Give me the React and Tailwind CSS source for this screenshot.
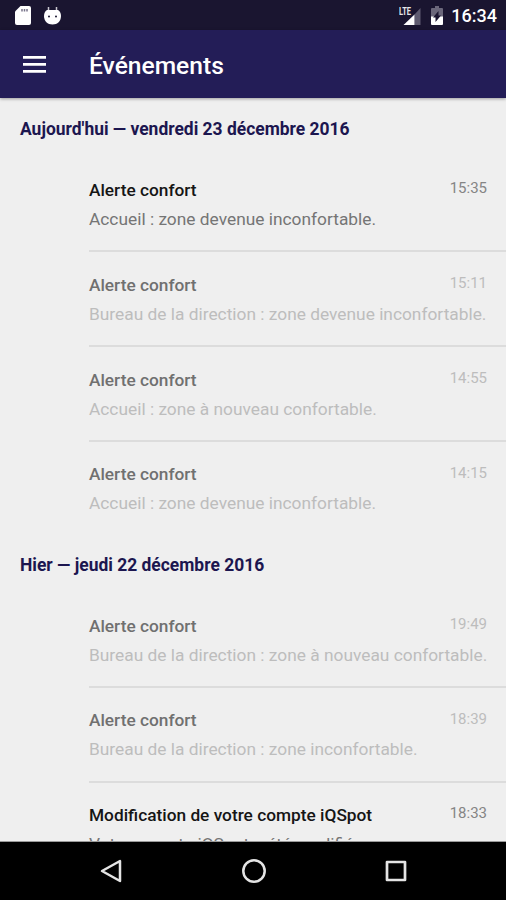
import clsx from "clsx";

const sections = [
  {
    title: "Aujourd'hui — vendredi 23 décembre 2016",
    events: [
      { title: "Alerte confort", text: "Accueil : zone devenue inconfortable.", time: "15:35", unread: true },
      { title: "Alerte confort", text: "Bureau de la direction : zone devenue inconfortable.", time: "15:11" },
      { title: "Alerte confort", text: "Accueil : zone à nouveau confortable.", time: "14:55" },
      { title: "Alerte confort", text: "Accueil : zone devenue inconfortable.", time: "14:15" },
    ],
  },
  {
    title: "Hier — jeudi 22 décembre 2016",
    events: [
      { title: "Alerte confort", text: "Bureau de la direction : zone à nouveau confortable.", time: "19:49" },
      { title: "Alerte confort", text: "Bureau de la direction : zone inconfortable.", time: "18:39" },
      { title: "Modification de votre compte iQSpot", text: "Votre compte iQSpot a été modifié.", time: "18:33", unread: true },
    ],
  },
];

const StatusBar = () => (
  <div className="flex h-[30px] shrink-0 items-center bg-[#1a1530] pl-[15px] pr-[9px] text-white">
    <svg width="16" height="19" viewBox="0 0 16 19">
      <path d="M5.500 0H14a2 2 0 0 1 2 2v15a2 2 0 0 1-2 2H2a2 2 0 0 1-2-2V5.500z" fill="#fff" />
      <path d="M7 3v2.500M9.500 3v2.500M12 3v2.500" stroke="#77738a" strokeWidth="1.500" />
    </svg>
    <svg className="ml-[13px]" width="17" height="19" viewBox="0 0 17 19">
      <path d="M4.500 1v4M12.500 1v4" stroke="#c9c7d0" strokeWidth="1.500" />
      <path d="M3 4h11c2 1 3 3.500 3 6 0 5-3.500 8.500-8.500 8.500S0 15 0 10c0-2.500 1-5 3-6z" fill="#fff" />
      <circle cx="5" cy="10.500" r="1" fill="#1a1530" />
      <circle cx="12" cy="10.500" r="1" fill="#1a1530" />
    </svg>
    <svg className="ml-auto" width="22" height="19" viewBox="0 0 22 19">
      <path d="M21.500 2v17h-6V8.500z" fill="#5f5b70" />
      <path d="M15.500 8.500V19H4.500z" fill="#fff" />
      <text x="0" y="8.500" textLength="12" lengthAdjust="spacingAndGlyphs" fill="#e6e5ea" className="text-[10px] font-bold">
        LTE
      </text>
    </svg>
    <svg className="ml-[10px]" width="12" height="19" viewBox="0 0 12 19">
      <path d="M4 0h4v2h3a1 1 0 0 1 1 1v8H0V3a1 1 0 0 1 1-1h3z" fill="#6b677b" />
      <path d="M0 10.500h12V18a1 1 0 0 1-1 1H1a1 1 0 0 1-1-1z" fill="#fff" />
      <path d="M7.500 5v4.500H10L4.500 16v-4.500H2z" fill="#1a1530" />
    </svg>
    <span className="ml-[8px] mt-[2px] text-[18px] font-medium leading-none">16:34</span>
  </div>
);

const AppBar = () => (
  <header className="z-10 flex h-[68px] shrink-0 items-center bg-[#231d57] pl-[23px] text-white shadow-[0_1px_3px_rgba(0,0,0,0.35)]">
    <svg className="mt-[2px]" width="23" height="18" viewBox="0 0 23 18" fill="#fff">
      <path d="M0 0h23v2.800H0zM0 7h23v2.800H0zM0 14h23v2.800H0z" />
    </svg>
    <h1 className="ml-[43px] mt-[4px] text-[24.6px] font-medium leading-none">Événements</h1>
  </header>
);

const EventRow = ({ event, last }) => (
  <li className="pl-[89px]">
    <div className={clsx("h-[94.75px] pt-[20.6px]", !last && "border-b-2 border-[#dcdcdc]")}>
      <div className="flex justify-between pr-[19px]">
        <h3 className={clsx("text-[17.3px] font-medium leading-6", event.unread ? "text-[#151515]" : "text-[#707070]")}>
          {event.title}
        </h3>
        <span className={clsx("mt-[0.4px] text-[15px] leading-5", event.unread ? "text-[#858585]" : "text-[#bdbdbd]")}>
          {event.time}
        </span>
      </div>
      <p className={clsx("mt-[5px] whitespace-nowrap text-[17.33px] leading-6", event.unread ? "text-[#757575]" : "text-[#bdbdbd]")}>
        {event.text}
      </p>
    </div>
  </li>
);

const NavBar = () => (
  <nav className="flex h-[58px] shrink-0 items-center justify-between bg-black pl-[100px] pr-[99px]">
    <svg width="22" height="24" viewBox="0 0 22 24" fill="none" stroke="#e4e4e4" strokeWidth="2.500" strokeLinejoin="round">
      <path d="M20 2v20L2 12z" />
    </svg>
    <svg width="26" height="26" viewBox="0 0 26 26" fill="none" stroke="#e4e4e4" strokeWidth="2.500">
      <circle cx="13" cy="13" r="10.700" />
    </svg>
    <svg width="22" height="22" viewBox="0 0 22 22" fill="none" stroke="#e4e4e4" strokeWidth="2.700" strokeLinejoin="round">
      <path d="M2 2h18v18H2z" />
    </svg>
  </nav>
);

const App = () => {
  return (
    <div className="flex h-[900px] w-[506px] flex-col overflow-hidden bg-[#efefef] font-['Roboto',sans-serif]">
      <StatusBar />
      <AppBar />
      <main className="min-h-0 flex-1 overflow-hidden border-b border-[#9a9a9a] pt-[3px]">
        {sections.map((section) => (
          <section key={section.title}>
            <h2 className="flex h-[56.5px] items-center pl-5 text-[17.45px] font-bold text-[#1c164f]">{section.title}</h2>
            <ul>
              {section.events.map((event, i) => (
                <EventRow key={event.time} event={event} last={i === section.events.length - 1} />
              ))}
            </ul>
          </section>
        ))}
      </main>
      <NavBar />
    </div>
  );
};

export default App;
